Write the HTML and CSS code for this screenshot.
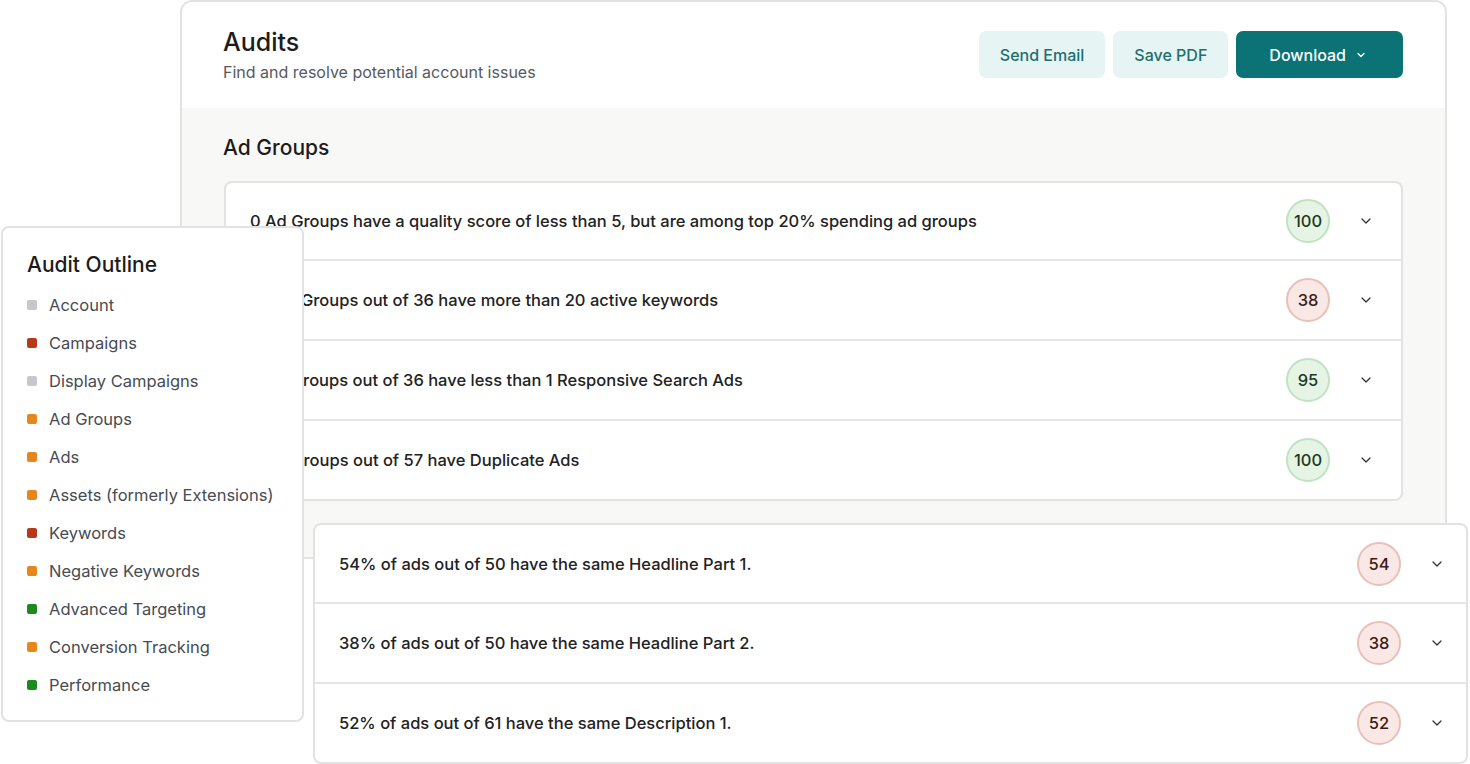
FILE: index.html
```html
<!DOCTYPE html>
<html lang="en">
<head>
    <meta charset="UTF-8">
    <meta name="viewport" content="width=device-width, initial-scale=1.0">
    <title>Audits</title>
    <link rel="stylesheet" href="styles.css">
</head>
<body>
    <div class="stage">
        <div class="panel">
            <header class="panel-head">
                <div>
                    <h1>Audits</h1>
                    <p>Find and resolve potential account issues</p>
                </div>
                <div class="actions">
                    <a href="#" class="btn btn-light">Send Email</a>
                    <a href="#" class="btn btn-light">Save PDF</a>
                    <a href="#" class="btn btn-dark">Download
                        <svg width="10" height="6" viewBox="0 0 10 6"><path d="M2 1.5l3 3 3-3" fill="none" stroke="#fff" stroke-width="1.3" stroke-linecap="round" stroke-linejoin="round"/></svg>
                    </a>
                </div>
            </header>
            <section class="panel-body">
                <h2>Ad Groups</h2>
                <div class="list">
                    <div class="row">
                        <span class="row-text">0 Ad Groups have a quality score of less than 5, but are among top 20% spending ad groups</span>
                        <span class="score good">100</span>
                        <svg class="chev" width="12" height="8" viewBox="0 0 12 8"><path d="M2 2l4 4 4-4" fill="none" stroke="#333" stroke-width="1.3" stroke-linecap="round" stroke-linejoin="round"/></svg>
                    </div>
                    <div class="row">
                        <span class="row-text">22 Ad Groups out of 36 have more than 20 active keywords</span>
                        <span class="score bad">38</span>
                        <svg class="chev" width="12" height="8" viewBox="0 0 12 8"><path d="M2 2l4 4 4-4" fill="none" stroke="#333" stroke-width="1.3" stroke-linecap="round" stroke-linejoin="round"/></svg>
                    </div>
                    <div class="row">
                        <span class="row-text">2 Ad Groups out of 36 have less than 1 Responsive Search Ads</span>
                        <span class="score good">95</span>
                        <svg class="chev" width="12" height="8" viewBox="0 0 12 8"><path d="M2 2l4 4 4-4" fill="none" stroke="#333" stroke-width="1.3" stroke-linecap="round" stroke-linejoin="round"/></svg>
                    </div>
                    <div class="row">
                        <span class="row-text">0 Ad Groups out of 57 have Duplicate Ads</span>
                        <span class="score good">100</span>
                        <svg class="chev" width="12" height="8" viewBox="0 0 12 8"><path d="M2 2l4 4 4-4" fill="none" stroke="#333" stroke-width="1.3" stroke-linecap="round" stroke-linejoin="round"/></svg>
                    </div>
                </div>
            </section>
        </div>

        <div class="list float-list">
            <div class="row">
                <span class="row-text">54% of ads out of 50 have the same Headline Part 1.</span>
                <span class="score bad">54</span>
                <svg class="chev" width="12" height="8" viewBox="0 0 12 8"><path d="M2 2l4 4 4-4" fill="none" stroke="#333" stroke-width="1.3" stroke-linecap="round" stroke-linejoin="round"/></svg>
            </div>
            <div class="row">
                <span class="row-text">38% of ads out of 50 have the same Headline Part 2.</span>
                <span class="score bad">38</span>
                <svg class="chev" width="12" height="8" viewBox="0 0 12 8"><path d="M2 2l4 4 4-4" fill="none" stroke="#333" stroke-width="1.3" stroke-linecap="round" stroke-linejoin="round"/></svg>
            </div>
            <div class="row">
                <span class="row-text">52% of ads out of 61 have the same Description 1.</span>
                <span class="score bad">52</span>
                <svg class="chev" width="12" height="8" viewBox="0 0 12 8"><path d="M2 2l4 4 4-4" fill="none" stroke="#333" stroke-width="1.3" stroke-linecap="round" stroke-linejoin="round"/></svg>
            </div>
        </div>

        <aside class="outline">
            <h3>Audit Outline</h3>
            <ul>
                <li><i class="dot grey"></i>Account</li>
                <li><i class="dot red"></i>Campaigns</li>
                <li><i class="dot grey"></i>Display Campaigns</li>
                <li><i class="dot orange"></i>Ad Groups</li>
                <li><i class="dot orange"></i>Ads</li>
                <li><i class="dot orange"></i>Assets (formerly Extensions)</li>
                <li><i class="dot red"></i>Keywords</li>
                <li><i class="dot orange"></i>Negative Keywords</li>
                <li><i class="dot green"></i>Advanced Targeting</li>
                <li><i class="dot orange"></i>Conversion Tracking</li>
                <li><i class="dot green"></i>Performance</li>
            </ul>
        </aside>
    </div>
</body>
</html>
```

FILE: styles.css
```css
body {
    font-family: Inter, "Noto Sans", sans-serif;
    background: #fff;
    margin: 0;
    padding: 0;
    color: #1c1c1c;
}
.stage {
    position: relative;
    width: 1470px;
    height: 764px;
    overflow: hidden;
}
.panel {
    position: absolute;
    left: 180px;
    top: 0;
    width: 1263px;
    height: 555px;
    border: 2px solid #e2e2e2;
    border-radius: 12px;
    background: #f8f8f6;
    overflow: hidden;
}
.panel-head {
    display: flex;
    justify-content: space-between;
    align-items: flex-start;
    background: #fff;
    height: 106px;
    padding: 0 42px 0 41px;
}
.panel-head h1 {
    font-size: 25px;
    font-weight: 500;
    margin: 25px 0 0 0;
    line-height: 30px;
}
.panel-head p {
    font-size: 16px;
    color: #555a60;
    margin: 5px 0 0 0;
}
.actions {
    display: flex;
    gap: 8px;
    margin-top: 29px;
}
.btn {
    display: flex;
    align-items: center;
    gap: 10px;
    height: 47px;
    padding: 0 21px;
    border-radius: 7px;
    font-size: 16px;
    font-weight: 500;
    text-decoration: none;
}
.btn-light {
    background: #e6f4f4;
    color: #1f6e70;
}
.btn-dark {
    background: #0b7276;
    color: #fff;
    padding: 0 37px 0 33px;
}
.panel-body {
    padding: 26px 42px 0 42px;
}
.panel-body h2 {
    font-size: 21px;
    font-weight: 500;
    margin: 0 0 19px -1px;
    line-height: 28px;
}
.list {
    background: #fff;
    border: 2px solid #e2e2e2;
    border-radius: 8px;
}
.row {
    display: flex;
    align-items: center;
    height: 78px;
    padding: 0 29px 0 24px;
    border-top: 2px solid #e6e6e6;
}
.row:first-child {
    border-top: none;
    height: 76px;
}
.row-text {
    flex: 1;
    font-size: 16.5px;
    font-weight: 500;
    color: #222;
}
.score {
    width: 40px;
    height: 40px;
    border-radius: 50%;
    display: flex;
    align-items: center;
    justify-content: center;
    font-size: 16.5px;
    font-weight: 500;
}
.score.good {
    background: #e6f4e6;
    border: 2px solid #bfe2bf;
    color: #1b3a1b;
}
.score.bad {
    background: #f9e8e5;
    border: 2px solid #e9c0b8;
    color: #3c1b16;
}
.chev {
    margin-left: 30px;
}
.float-list {
    position: absolute;
    left: 313px;
    top: 523px;
    width: 1151px;
}
.float-list .row {
    padding-right: 23px;
}
.float-list .row:first-child {
    height: 77px;
}
.outline {
    position: absolute;
    left: 1px;
    top: 226px;
    width: 277px;
    height: 469px;
    padding: 23px 0 0 22px;
    background: #fff;
    border: 2px solid #e2e2e2;
    border-radius: 8px;
}
.outline h3 {
    font-size: 21px;
    font-weight: 500;
    margin: 0 0 7px 2px;
    line-height: 28px;
}
.outline ul {
    list-style: none;
    margin: 0;
    padding: 0;
}
.outline li {
    display: flex;
    align-items: center;
    height: 38px;
    font-size: 16.5px;
    color: #474b52;
}
.dot {
    width: 10px;
    height: 10px;
    border-radius: 2px;
    margin: 0 12px 0 2px;
}
.dot.grey { background: #c5c7ca; }
.dot.red { background: #b8381a; }
.dot.orange { background: #e8861e; }
.dot.green { background: #1c8a1c; }
```
